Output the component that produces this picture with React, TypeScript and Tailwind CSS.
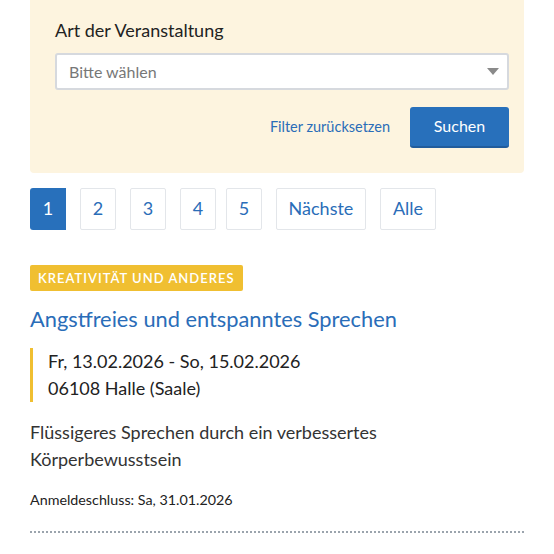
const pages = [
  { label: '1', w: 'w-[36px]' },
  { label: '2', w: 'w-[36px]' },
  { label: '3', w: 'w-[36px]' },
  { label: '4', w: 'w-[36px]' },
  { label: '5', w: 'w-[36px] -ml-[4px]' },
  { label: 'Nächste', w: 'w-[90px]' },
  { label: 'Alle', w: 'w-[56px]' },
];

export default function App() {
  return (
    <div className="w-[554px] h-[554px] overflow-hidden bg-white font-['Lato','Open_Sans',sans-serif] text-[#222]">
      <div className="px-[30px]">
        {/* Filter */}
        <div className="bg-[#fdf4df] rounded-b-[4px] pt-[18px] pb-[25px] pl-[25px] pr-[15px]">
          <label className="block text-[18px] leading-[24px] text-[#222]">Art der Veranstaltung</label>
          <div className="mt-[11px] h-[37px] bg-white border-2 border-[#d6d9de] rounded-[3px] flex items-center justify-between pl-[12px] pr-[5px]">
            <span className="text-[16px] text-[#777]">Bitte wählen</span>
            <svg width="16" height="9" viewBox="0 0 16 9" className="mr-[1px]">
              <path d="M2 1 L14 1 L8 8 Z" fill="#8a8a8a" />
            </svg>
          </div>
          <div className="mt-[17px] flex items-center justify-end gap-[20px]">
            <a className="text-[14.5px] text-[#2a6db8] -mt-[2px]">Filter zurücksetzen</a>
            <button className="w-[99px] h-[41px] pb-[2px] bg-[#2870bb] border-b-2 border-[#215c9c] rounded-[3px] text-white text-[16px]">
              Suchen
            </button>
          </div>
        </div>

        {/* Pagination */}
        <div className="mt-[15px] flex gap-[14px]">
          {pages.map((p, i) => (
            <div
              key={p.label}
              className={
                i === 0
                  ? `h-[42px] ${p.w} pb-[2px] flex items-center justify-center bg-[#2870bb] text-white text-[18px] rounded-l-[3px]`
                  : `h-[42px] ${p.w} pb-[2px] flex items-center justify-center border border-[#e3e6ea] text-[#2a6db8] text-[18px] rounded-[2px]`
              }
            >
              {p.label}
            </div>
          ))}
        </div>

        {/* Event */}
        <div className="mt-[35px]">
          <span className="inline-block bg-[#f0bf31] text-white text-[13px] font-semibold tracking-[1px] uppercase px-[8px] py-[4px] leading-[18px] rounded-[2px]">
            Kreativität und Anderes
          </span>
          <h2 className="mt-[13px] text-[21.8px] leading-[30px] text-[#2a6db8]">Angstfreies und entspanntes Sprechen</h2>
          <div className="mt-[14px] border-l-[3px] border-[#f0bf31] pl-[15px] text-[18px] leading-[27px]">
            <div>Fr, 13.02.2026 - So, 15.02.2026</div>
            <div>06108 Halle (Saale)</div>
          </div>
          <p className="mt-[17px] text-[18px] leading-[27px] text-[#333] w-[400px]">
            Flüssigeres Sprechen durch ein verbessertes Körperbewusstsein
          </p>
          <p className="mt-[18px] text-[14.3px] leading-[18px] text-[#222]">Anmeldeschluss: Sa, 31.01.2026</p>
          <div className="mt-[22px] border-b-2 border-dotted border-[#9ba4ad] w-[494px]" />
        </div>
      </div>
    </div>
  );
}
